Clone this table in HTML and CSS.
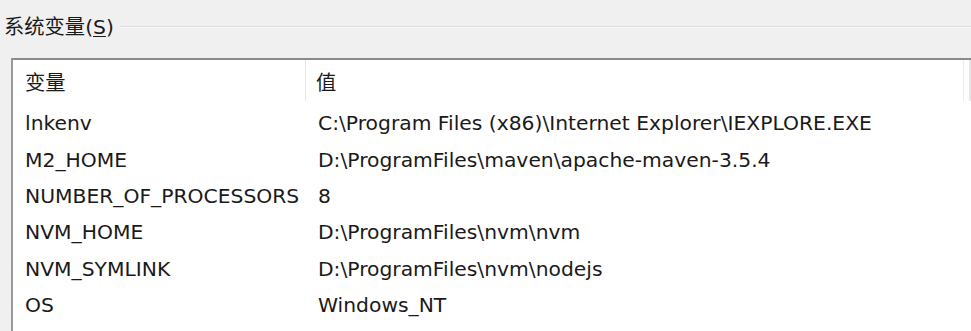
FILE: index.html
```html
<!DOCTYPE html>
<html lang="zh-CN">
<head>
<meta charset="utf-8">
<link rel="stylesheet" href="styles.css">
</head>
<body>
<div class="group">
  <div class="group-head">
    <span class="group-title">系统变量(<u>S</u>)</span>
    <span class="group-line"></span>
  </div>
  <div class="list">
    <div class="list-header">
      <div class="col col-name">变量</div>
      <div class="col col-value">值</div>
      <div class="col col-rest"></div>
    </div>
    <div class="row"><div class="cell cell-name">lnkenv</div><div class="cell">C:\Program Files (x86)\Internet Explorer\IEXPLORE.EXE</div></div>
    <div class="row"><div class="cell cell-name">M2_HOME</div><div class="cell">D:\ProgramFiles\maven\apache-maven-3.5.4</div></div>
    <div class="row"><div class="cell cell-name">NUMBER_OF_PROCESSORS</div><div class="cell">8</div></div>
    <div class="row"><div class="cell cell-name">NVM_HOME</div><div class="cell">D:\ProgramFiles\nvm\nvm</div></div>
    <div class="row"><div class="cell cell-name">NVM_SYMLINK</div><div class="cell">D:\ProgramFiles\nvm\nodejs</div></div>
    <div class="row"><div class="cell cell-name">OS</div><div class="cell">Windows_NT</div></div>
  </div>
</div>
</body>
</html>
```

FILE: styles.css
```css
html, body {
  margin: 0;
  padding: 0;
  background: #f0f0f0;
  height: 100%;
  overflow: hidden;
}
body {
  font-family: "DejaVu Sans", "Noto Sans CJK SC", sans-serif;
  font-size: 20.3px;
  color: #1a1a1a;
}
.group {
  padding-top: 14px;
}
.group-head {
  display: flex;
  align-items: center;
  height: 26px;
}
.group-title {
  padding-left: 4px;
  padding-right: 6px;
  line-height: 26px;
  white-space: nowrap;
}
.group-title u {
  text-decoration-thickness: 1px;
  text-underline-offset: 2px;
}
.group-line {
  flex: 1;
  border-top: 1px solid #dcdcdc;
  border-bottom: 1px solid #fafafa;
}
.list {
  margin-top: 18px;
  margin-left: 11px;
  background: #fff;
  border-top: 2px solid #8a8a8a;
  border-left: 2px solid #9a9a9a;
  height: 271px;
  overflow: hidden;
}
.list-header {
  display: flex;
  height: 41px;
  align-items: stretch;
}
.col {
  display: flex;
  align-items: center;
  box-sizing: border-box;
}
.col-name {
  width: 294px;
  padding-left: 12px;
  border-right: 1px solid #e5e5e5;
}
.col-value {
  width: 660px;
  padding-left: 10px;
  border-right: 1px solid #ececec;
}
.col-rest {
  width: 7px;
  border-right: 2px solid #e6e6e6;
}
.row {
  display: flex;
  box-sizing: border-box;
  height: 36.4px;
  align-items: center;
  padding-top: 8px;
}
.cell {
  white-space: nowrap;
  box-sizing: border-box;
}
.cell-name {
  width: 295px;
  padding-left: 12px;
}
.row .cell:last-child {
  padding-left: 10px;
}
```
